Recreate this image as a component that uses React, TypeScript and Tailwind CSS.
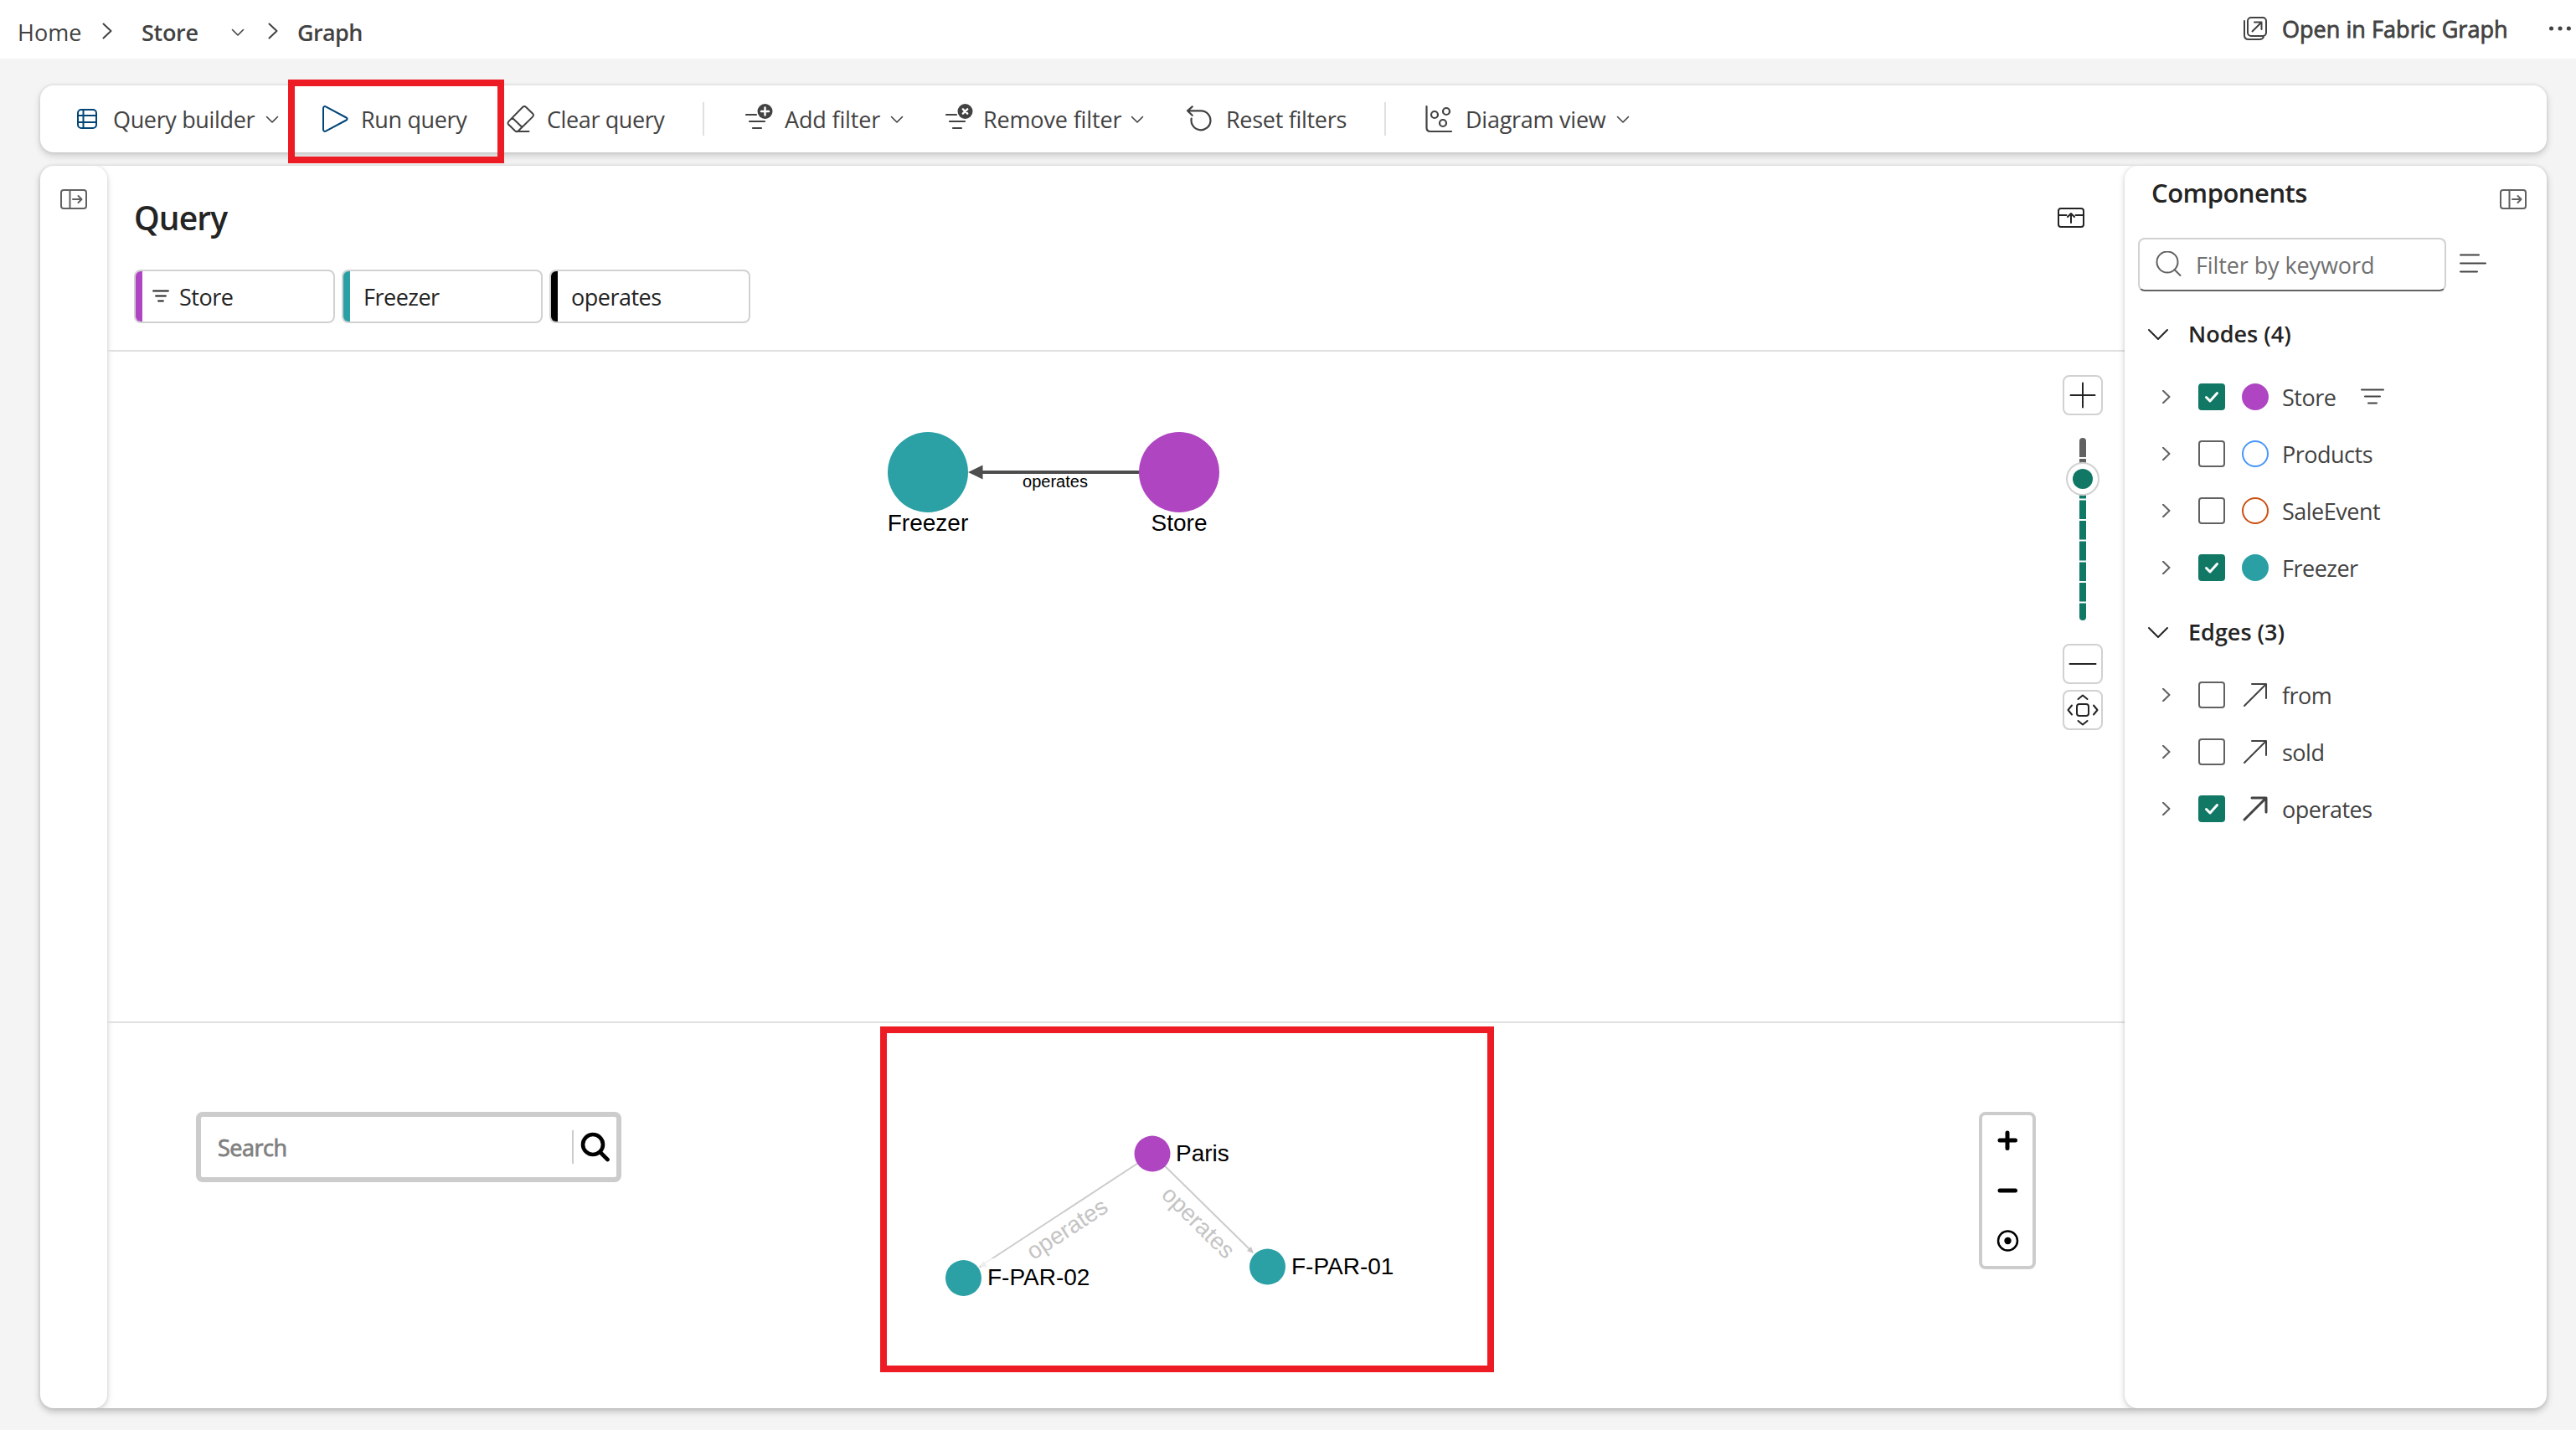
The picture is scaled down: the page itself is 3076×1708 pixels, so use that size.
import React from "react";
import clsx from "clsx";

const nodes = [
  { name: "Store", checked: true, swatch: "border-[#af45c2] bg-[#af45c2]", filtered: true },
  { name: "Products", checked: false, swatch: "border-[#4796fb]" },
  { name: "SaleEvent", checked: false, swatch: "border-[#ca5010]" },
  { name: "Freezer", checked: true, swatch: "border-[#2aa0a4] bg-[#2aa0a4]" },
];

const edges = [
  { name: "from", checked: false },
  { name: "sold", checked: false },
  { name: "operates", checked: true },
];

const Icon = ({
  size = 32,
  stroke = 2,
  className = "",
  children,
}: {
  size?: number;
  stroke?: number;
  className?: string;
  children: React.ReactNode;
}) => (
  <svg
    width={size}
    height={size}
    viewBox={`0 0 ${size} ${size}`}
    fill="none"
    stroke="currentColor"
    strokeWidth={stroke}
    strokeLinecap="round"
    strokeLinejoin="round"
    className={clsx("shrink-0", className)}
  >
    {children}
  </svg>
);

const ChevronDown = ({ className = "" }) => (
  <Icon size={20} stroke={1.6} className={className}>
    <path d="M3.5 7.5L10 14L16.5 7.5" />
  </Icon>
);

const ChevronRight = ({ className = "" }) => (
  <Icon size={20} className={className}>
    <path d="M5.5 1.5L14.5 10L5.5 18.5" />
  </Icon>
);

const PanelIcon = ({ className = "" }) => (
  <Icon className={className}>
    <rect x="1" y="5" width="30" height="22" rx="3" />
    <path d="M11.5 5V27M15 16H25M21.5 12L25.5 16L21.5 20" />
  </Icon>
);

const FilterBadgeIcon = ({ className = "", mark }: { className?: string; mark: string }) => (
  <Icon size={36} stroke={2.2} className={className}>
    <path d="M1 13H13M5 21H23M9 29H19" />
    <circle cx="23.5" cy="9" r="9" fill="currentColor" stroke="none" />
    <path d={mark} stroke="#fff" strokeWidth="2.4" />
  </Icon>
);

const Toolbar = () => (
  <div className="flex h-20 items-center rounded-2xl bg-white pl-10 text-[#424242] shadow-[0_0_4px_rgba(0,0,0,0.12),0_4px_8px_rgba(0,0,0,0.16)]">
    <Icon className="text-[#004578]">
      <rect x="5" y="5" width="22" height="22" rx="4" />
      <path d="M11.5 5V27M5 12H27M5 20H27" />
    </Icon>
    <span className="ml-[15px] w-[180px] pt-0.5 tracking-[-0.35px]">Query builder</span>
    <ChevronDown />

    <Icon className="ml-[49px] text-[#004578]">
      <path d="M2 3.2C2 1.6 3.6 .6 5 1.4L29.5 14.5C31 15.3 31 16.7 29.5 17.5L5 30.6C3.6 31.4 2 30.4 2 28.8Z" />
    </Icon>
    <span className="ml-[15px] w-[173px] pt-0.5 tracking-[-0.35px]">Run query</span>

    <Icon size={36}>
      <path d="M20.3 3.8a2.5 2.5 0 0 1 3.6 0l8.3 8a2.5 2.5 0 0 1 0 3.6L15 32.3a3 3 0 0 1-4 0L3.3 24.7a2.5 2.5 0 0 1 0-3.6ZM7.8 16.8L19.5 28M13 33H27.5" />
    </Icon>
    <span className="ml-[13px] w-[186px] pt-0.5 tracking-[-0.4px]">Clear query</span>
    <div className="h-10 w-0.5 bg-[#e0e0e0]" />

    <FilterBadgeIcon className="ml-[49px]" mark="M23.5 4.5V13.5M19 9H28" />
    <span className="ml-[11px] w-[124px] pt-0.5 tracking-[-0.15px]">Add filter</span>
    <ChevronDown />

    <FilterBadgeIcon className="ml-12" mark="M20.8 6.3L26.2 11.7M26.2 6.3L20.8 11.7" />
    <span className="ml-[9px] w-[174px] pt-0.5 tracking-[-0.15px]">Remove filter</span>
    <ChevronDown />

    <Icon className="ml-12" stroke={2.2}>
      <path d="M7.7 1.3L2 6.3L7.7 11.8M2 6.3H18A11.5 11.5 0 1 1 6.7 15.5" />
    </Icon>
    <span className="ml-4 w-[189px] pt-0.5 tracking-[-0.3px]">Reset filters</span>
    <div className="h-10 w-0.5 bg-[#e0e0e0]" />

    <Icon size={36} className="ml-[45px]" stroke={2.2}>
      <path d="M3.5 3V28.5Q3.5 33 8 33H33" />
      <circle cx="13" cy="13" r="4" />
      <circle cx="27" cy="9" r="4" />
      <circle cx="23" cy="23" r="4" />
    </Icon>
    <span className="ml-[14px] w-[178px] pt-0.5 tracking-[-0.25px]">Diagram view</span>
    <ChevronDown />
  </div>
);

const Breadcrumb = () => (
  <header className="flex h-[70px] items-start bg-white pt-[19px] leading-10 text-[#424242]">
    <span className="w-[98px] pl-[21px] tracking-normal">Home</span>
    <ChevronRight className="ml-5 mt-2" />
    <span className="ml-[31px] w-[105px] font-semibold">Store</span>
    <ChevronDown className="mt-[9px]" />
    <ChevronRight className="ml-[22px] mt-2" />
    <span className="ml-[19px] font-semibold tracking-[-0.6px]">Graph</span>
    <div className="mr-1 mt-[-4px] flex flex-1 items-center justify-end">
      <Icon size={36} className="-mt-0.5">
        <rect x="9" y="5" width="22" height="22" rx="4" />
        <path d="M5 9V26Q5 31 10 31H23Q27 31 28 28M14.5 21.5L25.5 10.5M17 10.5H25.5V19" />
      </Icon>
      <span className="ml-[14px] w-[317px] tracking-[0.05px] [-webkit-text-stroke:0.8px_#424242]">Open in Fabric Graph</span>
      <Icon size={30} className="-mt-0.5">
        <path d="M4.5 15H4.6M15 15H15.1M25.3 15H25.4" strokeWidth="5" />
      </Icon>
    </div>
  </header>
);

const QueryChip = ({ color, children }: { color: string; children: React.ReactNode }) => (
  <div className="flex h-16 w-60 overflow-hidden rounded-lg border-2 border-[#d1d1d1] text-[#242424]">
    <div className={clsx("w-2", color)} />
    <div className="flex items-center pl-4 pt-0.5 tracking-[-0.5px]">{children}</div>
  </div>
);

const ZoomButton = ({ className = "", children }: { className?: string; children: React.ReactNode }) => (
  <button className={clsx("flex h-12 w-12 items-center justify-center rounded-lg border-2 border-[#d1d1d1] bg-white text-[#242424]", className)}>
    <Icon size={44}>{children}</Icon>
  </button>
);

const ZoomSlider = () => (
  <div className="absolute right-[26px] top-7 flex flex-col items-center">
    <ZoomButton>
      <path d="M22 7.5V36.5M7.5 22H36.5" />
    </ZoomButton>
    <svg width="48" height="218" className="mb-7 mt-[27px] shrink-0">
      <clipPath id="track">
        <rect x="20" width="8" height="218" rx="4" />
      </clipPath>
      <g clipPath="url(#track)">
        <rect x="20" width="8" height="49" fill="#616161" />
        <rect x="20" y="49" width="8" height="169" fill="#117865" />
        <path d="M20 24H28M20 73.5H28M20 98H28M20 122.5H28M20 147.5H28M20 172H28M20 196.5H28" stroke="#fff" strokeWidth="2" />
      </g>
      <circle cx="24" cy="49" r="19" fill="#fff" stroke="#d1d1d1" strokeWidth="2" />
      <circle cx="24" cy="49" r="12" fill="#117865" />
    </svg>
    <ZoomButton>
      <path d="M6.5 22H37.5" />
    </ZoomButton>
    <ZoomButton className="mt-[7px]">
      <rect x="15" y="15" width="14" height="14" rx="3" />
      <path d="M9 16.5L4.5 22L9 27.5M35 16.5L39.5 22L35 27.5M16.5 9L22 4.5L27.5 9M16.5 35L22 39.5L27.5 35" />
    </ZoomButton>
  </div>
);

const QueryGraph = () => (
  <div className="relative h-[800px]">
    <svg width="2409" height="800" fontFamily="'Liberation Sans', Arial, sans-serif" letterSpacing="0" textAnchor="middle">
      <path d="M1045 144H1234" stroke="#4d4d4d" strokeWidth="4" />
      <path d="M1028 144L1045.5 135.5V152.5Z" fill="#4d4d4d" />
      <circle cx="980" cy="144" r="48" fill="#2ba0a5" />
      <circle cx="1280" cy="144" r="48" fill="#af45c1" />
      <text x="1132" y="162" fontSize="20">operates</text>
      <text x="980" y="214" fontSize="28">Freezer</text>
      <text x="1280" y="214" fontSize="28">Store</text>
    </svg>
    <ZoomSlider />
  </div>
);

const ResultGraph = () => (
  <div className="relative h-[460px]">
    <svg width="2409" height="460" className="absolute inset-0" fontFamily="'Liberation Sans', Arial, sans-serif" fontSize="28" letterSpacing="0">
      <g stroke="#ccc" strokeWidth="2">
        <path d="M1248 156L1048 287" />
        <path d="M1248 156L1364 270" />
      </g>
      <path d="M1369 275L1366 267L1361 272Z" fill="#c4c4c4" />
      <path d="M1041 292L1046.5 284L1051 291Z" fill="#bbb" />
      <rect x="1043" y="281" width="138" height="38" fill="#fff" opacity="0.75" />
      <g fill="#c4c4c4" textAnchor="middle">
        <text transform="translate(1147 247) rotate(-33.3)" dy="8">operates</text>
        <text transform="translate(1302 239) rotate(44.5)" dy="8">operates</text>
      </g>
      <circle cx="1248" cy="156" r="21.5" fill="#af45c1" />
      <circle cx="1022.5" cy="304.5" r="21.5" fill="#2ba0a5" />
      <circle cx="1385.5" cy="291" r="21.5" fill="#2ba0a5" />
      <text x="1276" y="165">Paris</text>
      <text x="1051" y="313">F-PAR-02</text>
      <text x="1414" y="300">F-PAR-01</text>
    </svg>
    <div className="relative flex items-start justify-between px-[106px] pt-[106px]">
      <div className="flex h-[84px] w-[508px] items-center rounded-lg border-6 border-[#ccc] bg-white pl-5">
        <span className="flex-1 pt-0.5 text-[#808080] tracking-[-0.5px] [-webkit-text-stroke:0.8px_#808080]">Search</span>
        <div className="h-10 w-0.5 bg-[#ccc]" />
        <Icon size={36} stroke={4.6} className="ml-2 mr-[7px] text-black">
          <circle cx="15" cy="15" r="12" />
          <path d="M24 24.5L32.5 33" />
        </Icon>
      </div>
      <div className="flex h-[188px] w-[68px] flex-col items-center rounded-lg border-4 border-[#ccc] bg-white pt-[14px] text-black">
        <Icon stroke={5}>
          <path d="M16 7V25.5M7 16H25.5" />
        </Icon>
        <Icon stroke={5} className="mt-7">
          <path d="M7 16H25.5" />
        </Icon>
        <Icon stroke={2.5} className="mt-7">
          <circle cx="16.5" cy="16" r="11.5" />
          <circle cx="16.5" cy="16" r="4.2" fill="currentColor" stroke="none" />
        </Icon>
      </div>
    </div>
    <div className="absolute left-[923px] top-1 h-[413px] w-[733px] border-8 border-[#ed1c24]" />
  </div>
);

const QueryPanel = () => (
  <main className="flex-1">
    <div className="border-b-2 border-[#e0e0e0] pb-8 pl-8">
      <div className="flex h-[124px] items-center justify-between pr-12">
        <h2 className="text-[39px] font-semibold tracking-[-0.9px] text-[#242424]">Query</h2>
        <Icon className="text-[#242424]">
          <rect x="1" y="5" width="30" height="22" rx="3" />
          <path d="M1 13H10.5M21.5 13H31M16 22V11M12 15L16 11L20 15" />
        </Icon>
      </div>
      <div className="flex gap-2">
        <QueryChip color="bg-[#af45c2]">
          <Icon size={24} stroke={1.8} className="-ml-1.5 -mt-0.5 mr-2.5">
            <path d="M3 5.5H21M6 11.5H18M9 17.5H15" />
          </Icon>
          Store
        </QueryChip>
        <QueryChip color="bg-[#2aa0a4]">Freezer</QueryChip>
        <QueryChip color="bg-black">operates</QueryChip>
      </div>
    </div>
    <QueryGraph />
    <div className="h-0.5 bg-[#e0e0e0]" />
    <ResultGraph />
  </main>
);

const SectionHeader = ({ children }: { children: React.ReactNode }) => (
  <div className="flex h-12 items-center pl-6 font-semibold text-[#242424]">
    <Icon>
      <path d="M5 11L16 22L27 11" />
    </Icon>
    <span className="ml-5 tracking-normal">{children}</span>
  </div>
);

const ComponentRow = ({
  item,
}: {
  item: { name: string; checked: boolean; swatch?: string; filtered?: boolean };
}) => (
  <div className="flex h-[68px] items-center pl-[42px] text-[#424242]">
    <Icon size={16} className="text-[#616161]">
      <path d="M4 .8L11.5 8L4 15.2" />
    </Icon>
    <div
      className={clsx(
        "ml-[30px] flex h-8 w-8 items-center justify-center rounded-[4px] border-2",
        item.checked ? "border-[#117865] bg-[#117865] text-white" : "border-[#616161]"
      )}
    >
      {item.checked && (
        <Icon size={24} stroke={3}>
          <path d="M5.5 12.5L10 17L18.5 7.5" />
        </Icon>
      )}
    </div>
    {item.swatch ? (
      <div className={clsx("ml-5 h-8 w-8 rounded-full border-2", item.swatch)} />
    ) : (
      <Icon stroke={item.checked ? 3 : 2} className="ml-5">
        <path d="M3 29L29 3M12 3H29V20" />
      </Icon>
    )}
    <span className="ml-4 min-w-[92px] pt-0.5 tracking-[-0.5px]">{item.name}</span>
    {item.filtered && (
      <Icon>
        <path d="M3 7.5H29M7 15.5H25M11 23.5H21" />
      </Icon>
    )}
  </div>
);

const ComponentsPanel = () => (
  <aside className="w-[504px] rounded-2xl bg-white shadow-[0_0_4px_rgba(0,0,0,0.12),0_4px_8px_rgba(0,0,0,0.14)]">
    <div className="flex h-[86px] items-start justify-between pl-8 pr-6">
      <h3 className="mt-3 text-[31px] font-semibold leading-10 tracking-[-0.5px] text-[#242424]">Components</h3>
      <PanelIcon className="mt-6 text-[#616161]" />
    </div>
    <div className="flex pl-4">
      <div className="flex h-16 w-[368px] items-center rounded-lg border-2 border-[#d1d1d1] border-b-[#616161] pl-[18px] text-[#707070]">
        <Icon className="text-[#616161]">
          <circle cx="15" cy="13" r="12.5" />
          <path d="M23.5 22L30.5 29" />
        </Icon>
        <span className="ml-[17px] pt-0.5 tracking-[-0.1px]">Filter by keyword</span>
      </div>
      <Icon className="ml-4 mt-[14px] text-[#424242]">
        <path d="M1 6.5H23M1 16.5H31M1 26.5H21" />
      </Icon>
    </div>
    <div className="mt-[27px]">
      <SectionHeader>Nodes (4)</SectionHeader>
      <div className="mt-[17px]">
        {nodes.map((item) => (
          <ComponentRow key={item.name} item={item} />
        ))}
      </div>
    </div>
    <div className="mt-[19px]">
      <SectionHeader>Edges (3)</SectionHeader>
      <div className="mt-[17px]">
        {edges.map((item) => (
          <ComponentRow key={item.name} item={item} />
        ))}
      </div>
    </div>
  </aside>
);

const App = () => {
  return (
    <div className="relative h-[1708px] w-[3076px] overflow-hidden whitespace-nowrap bg-[#f4f4f4] font-['Open_Sans',sans-serif] text-[27px] tracking-[-0.3px]">
      <Breadcrumb />
      <div className="ml-12 mr-[35px] mt-8 flex flex-col gap-4">
        <Toolbar />
        <div className="rounded-2xl shadow-[0_0_4px_rgba(0,0,0,0.12),0_4px_8px_rgba(0,0,0,0.22)]">
          <div className="flex h-[1484px] overflow-hidden rounded-2xl bg-white">
            <aside className="w-20 rounded-2xl bg-white pl-6 pt-6 shadow-[0_0_4px_rgba(0,0,0,0.12),0_4px_8px_rgba(0,0,0,0.14)]">
              <PanelIcon className="text-[#616161]" />
            </aside>
            <QueryPanel />
            <ComponentsPanel />
          </div>
        </div>
      </div>
      {/* highlight around Run query */}
      <div className="absolute left-[344px] top-[95px] h-[100px] w-[258px] border-8 border-[#ed1c24]" />
    </div>
  );
};

export default App;
